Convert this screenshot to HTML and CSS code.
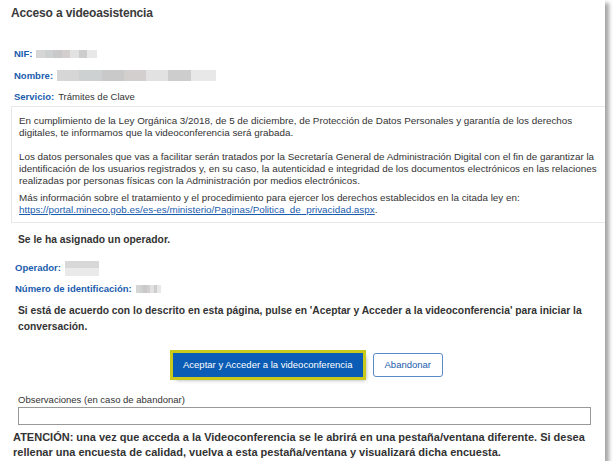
FILE: index.html
```html
<!DOCTYPE html>
<html lang="es">
<head>
    <meta charset="UTF-8">
    <title>Acceso a videoasistencia</title>
    <link rel="stylesheet" href="styles.css">
</head>
<body>
    <div class="ventana">
        <h2 class="titulo">Acceso a videoasistencia</h2>

        <div class="datos">
            <p class="dato"><span class="etiqueta">NIF:</span> <span class="oculto oculto-nif"></span></p>
            <p class="dato"><span class="etiqueta">Nombre:</span> <span class="oculto oculto-nombre"></span></p>
            <p class="dato"><span class="etiqueta">Servicio:</span> Trámites de Clave</p>
        </div>

        <div class="aviso">
            <p>En cumplimiento de la Ley Orgánica 3/2018, de 5 de diciembre, de Protección de Datos Personales y garantía de los derechos digitales, te informamos que la videoconferencia será grabada.</p>
            <p>Los datos personales que vas a facilitar serán tratados por la Secretaría General de Administración Digital con el fin de garantizar la identificación de los usuarios registrados y, en su caso, la autenticidad e integridad de los documentos electrónicos en las relaciones realizadas por personas físicas con la Administración por medios electrónicos.</p>
            <p>Más información sobre el tratamiento y el procedimiento para ejercer los derechos establecidos en la citada ley en:<br><a href="#">https://portal.mineco.gob.es/es-es/ministerio/Paginas/Politica_de_privacidad.aspx</a>.</p>
        </div>

        <div class="operador">
            <p class="destacado">Se le ha asignado un operador.</p>
            <p class="dato"><span class="etiqueta">Operador:</span> <span class="oculto oculto-operador"></span></p>
            <p class="dato"><span class="etiqueta">Número de identificación:</span> <span class="oculto oculto-numero"></span></p>
            <p class="destacado">Si está de acuerdo con lo descrito en esta página, pulse en 'Aceptar y Acceder a la videoconferencia' para iniciar la<br>conversación.</p>
        </div>

        <div class="botones">
            <button class="btn btn-principal">Aceptar y Acceder a la videoconferencia</button>
            <button class="btn btn-secundario">Abandonar</button>
        </div>

        <div class="observaciones">
            <label for="obs">Observaciones (en caso de abandonar)</label>
            <input type="text" id="obs">
        </div>

        <p class="atencion">ATENCIÓN: una vez que acceda a la Videoconferencia se le abrirá en una pestaña/ventana diferente. Si desea rellenar una encuesta de calidad, vuelva a esta pestaña/ventana y visualizará dicha encuesta.</p>
    </div>
</body>
</html>
```

FILE: styles.css
```css
body {
    margin: 0;
    background-color: #fff;
    font-family: "Liberation Sans", Arial, sans-serif;
    color: #333;
}
.ventana {
    width: 605px;
    height: 461px;
    box-sizing: border-box;
    padding: 0 0 0 11px;
    background-color: #fff;
    box-shadow: 4px 3px 4px rgba(0,0,0,0.35);
    overflow: hidden;
}
.titulo {
    margin: 0;
    padding-top: 6px;
    font-size: 12px;
    font-weight: bold;
    letter-spacing: -0.15px;
    color: #3a3a3a;
    line-height: 15px;
}
.datos {
    margin-top: 27px;
    padding-left: 3px;
}
.dato {
    margin: 0 0 9.5px 0;
    font-size: 9.5px;
    line-height: 12px;
    display: flex;
    align-items: center;
    gap: 4px;
}
.datos .dato:last-child {
    margin-bottom: 3px;
}
.etiqueta {
    color: #1a5cad;
    font-weight: bold;
}
.oculto {
    display: inline-block;
    height: 8px;
    background: linear-gradient(90deg, #d6d6d6 0 14%, #cdd1d1 14% 28%, #c9c9c9 28% 42%, #d4cfcf 42% 56%, #e2e2e2 56% 70%, #cdcdcd 70% 84%, #e8e8e8 84% 100%);
}
.oculto-nif {
    width: 61px;
}
.oculto-nombre {
    width: 159px;
    height: 11px;
}
.oculto-operador {
    width: 34px;
    height: 15px;
    background: linear-gradient(180deg, #d8d8d8 0 50%, #eaeaea 50% 100%);
}
.oculto-numero {
    width: 25px;
    height: 8px;
}
.aviso {
    margin: 0 -5px 0 0;
    border: 1px solid #e6e9ec;
    border-right: none;
    padding: 8px 0 6px 7px;
    font-size: 9.85px;
    line-height: 12px;
    color: #333;
}
.aviso p {
    margin: 0 0 12px 0;
}
.aviso p + p {
    margin-bottom: 5px;
}
.aviso p:last-child {
    margin-bottom: 0;
}
.aviso a {
    color: #1a5cad;
}
.operador {
    padding-left: 7px;
    padding-top: 9px;
}
.destacado {
    margin: 0 0 12.5px 0;
    font-size: 10.3px;
    line-height: 16px;
    font-weight: bold;
    color: #333;
    white-space: nowrap;
}
.operador .dato {
    margin-bottom: 7.5px;
    margin-left: -3px;
}
.operador .dato + .destacado {
    margin-top: 7px;
    margin-bottom: 10px;
}
.botones {
    display: flex;
    justify-content: center;
    gap: 10px;
    margin-top: 18px;
}
.btn {
    font-family: "Liberation Sans", Arial, sans-serif;
    font-size: 9.5px;
    height: 24px;
    border-radius: 3px;
    cursor: pointer;
}
.btn-principal {
    background-color: #0b5cb4;
    color: #fff;
    border: none;
    outline: 3px solid #c9c91c;
    box-shadow: 3px 3px 4px rgba(0,0,0,0.35);
    border-radius: 0;
    padding: 0 10px;
}
.btn-secundario {
    background-color: #fff;
    color: #1a5cad;
    border: 1px solid #5a8ac8;
    padding: 0 11px;
}
.observaciones {
    margin-top: 17px;
    padding-left: 7px;
}
.observaciones label {
    display: block;
    font-size: 9.5px;
    line-height: 12px;
    color: #333;
    margin-bottom: 1px;
}
.observaciones input {
    width: 573px;
    height: 18px;
    box-sizing: border-box;
    border: 1px solid #999;
    margin: 0;
}
.atencion {
    margin: 5px 0 0 2px;
    font-size: 11px;
    line-height: 15px;
    font-weight: bold;
    color: #333;
}
```
